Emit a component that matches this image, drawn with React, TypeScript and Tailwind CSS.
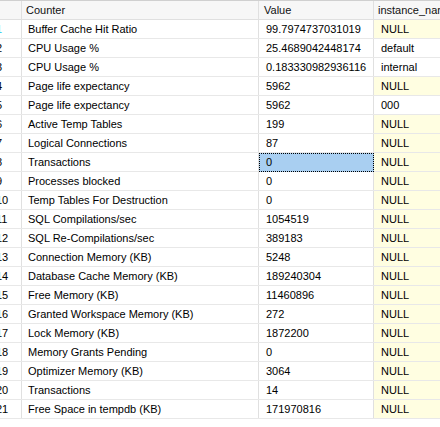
import React from "react";

type Row = { counter: string; value: string; instance: string | null };

const rows: Row[] = [
  { counter: "Buffer Cache Hit Ratio", value: "99.7974737031019", instance: null },
  { counter: "CPU Usage %", value: "25.4689042448174", instance: "default" },
  { counter: "CPU Usage %", value: "0.183330982936116", instance: "internal" },
  { counter: "Page life expectancy", value: "5962", instance: null },
  { counter: "Page life expectancy", value: "5962", instance: "000" },
  { counter: "Active Temp Tables", value: "199", instance: null },
  { counter: "Logical Connections", value: "87", instance: null },
  { counter: "Transactions", value: "0", instance: null },
  { counter: "Processes blocked", value: "0", instance: null },
  { counter: "Temp Tables For Destruction", value: "0", instance: null },
  { counter: "SQL Compilations/sec", value: "1054519", instance: null },
  { counter: "SQL Re-Compilations/sec", value: "389183", instance: null },
  { counter: "Connection Memory (KB)", value: "5248", instance: null },
  { counter: "Database Cache Memory (KB)", value: "189240304", instance: null },
  { counter: "Free Memory (KB)", value: "11460896", instance: null },
  { counter: "Granted Workspace Memory (KB)", value: "272", instance: null },
  { counter: "Lock Memory (KB)", value: "1872200", instance: null },
  { counter: "Memory Grants Pending", value: "0", instance: null },
  { counter: "Optimizer Memory (KB)", value: "3064", instance: null },
  { counter: "Transactions", value: "14", instance: null },
  { counter: "Free Space in tempdb (KB)", value: "171970816", instance: null },
];

export default function App() {
  return (
    <div
      className="w-[440px] h-[427px] overflow-hidden bg-white text-[11px] text-black"
      style={{ fontFamily: '"Liberation Sans", Arial, sans-serif' }}
    >
      {/* Header */}
      <div className="flex h-[20px] border-t border-t-[#d0d0d0] border-b border-b-[#e0e0e0] bg-[#f7f7f7] leading-[18px] text-[#111]">
        <div className="w-[22px] shrink-0 border-r border-r-[#e0e0e0]" />
        <div className="w-[237px] shrink-0 border-r border-r-[#e0e0e0] pl-[4px]">Counter</div>
        <div className="w-[115px] shrink-0 border-r border-r-[#e0e0e0] pl-[5px]">Value</div>
        <div className="w-[120px] shrink-0 pl-[4px] whitespace-nowrap">instance_name</div>
      </div>

      {/* Rows */}
      {rows.map((r, i) => {
        const selected = i === 7;
        return (
          <div key={i} className="flex h-[19px] border-b border-b-[#e8e8e8] leading-[18px]">
            <div className="w-[22px] shrink-0 border-r border-r-[#e0e0e0] overflow-hidden whitespace-nowrap">
              <span className={"-ml-[4px] inline-block " + (i === 0 ? "text-[#22c8ee]" : "")}>{i + 1}</span>
            </div>
            <div className="w-[237px] shrink-0 border-r border-r-[#e0e0e0] pl-[6px] whitespace-nowrap overflow-hidden">
              {r.counter}
            </div>
            {selected ? (
              <div className="w-[115px] shrink-0 border border-dotted border-black bg-[#a9cff1] pl-[6px] leading-[16px] -mb-px">
                {r.value}
              </div>
            ) : (
              <div className="w-[115px] shrink-0 border-r border-r-[#e0e0e0] pl-[7px] whitespace-nowrap overflow-hidden">
                {r.value}
              </div>
            )}
            <div
              className={
                "w-[120px] shrink-0 pl-[7px] whitespace-nowrap " +
                (r.instance === null ? "bg-[#fffee1]" : "bg-white")
              }
            >
              {r.instance === null ? "NULL" : r.instance}
            </div>
          </div>
        );
      })}
    </div>
  );
}
